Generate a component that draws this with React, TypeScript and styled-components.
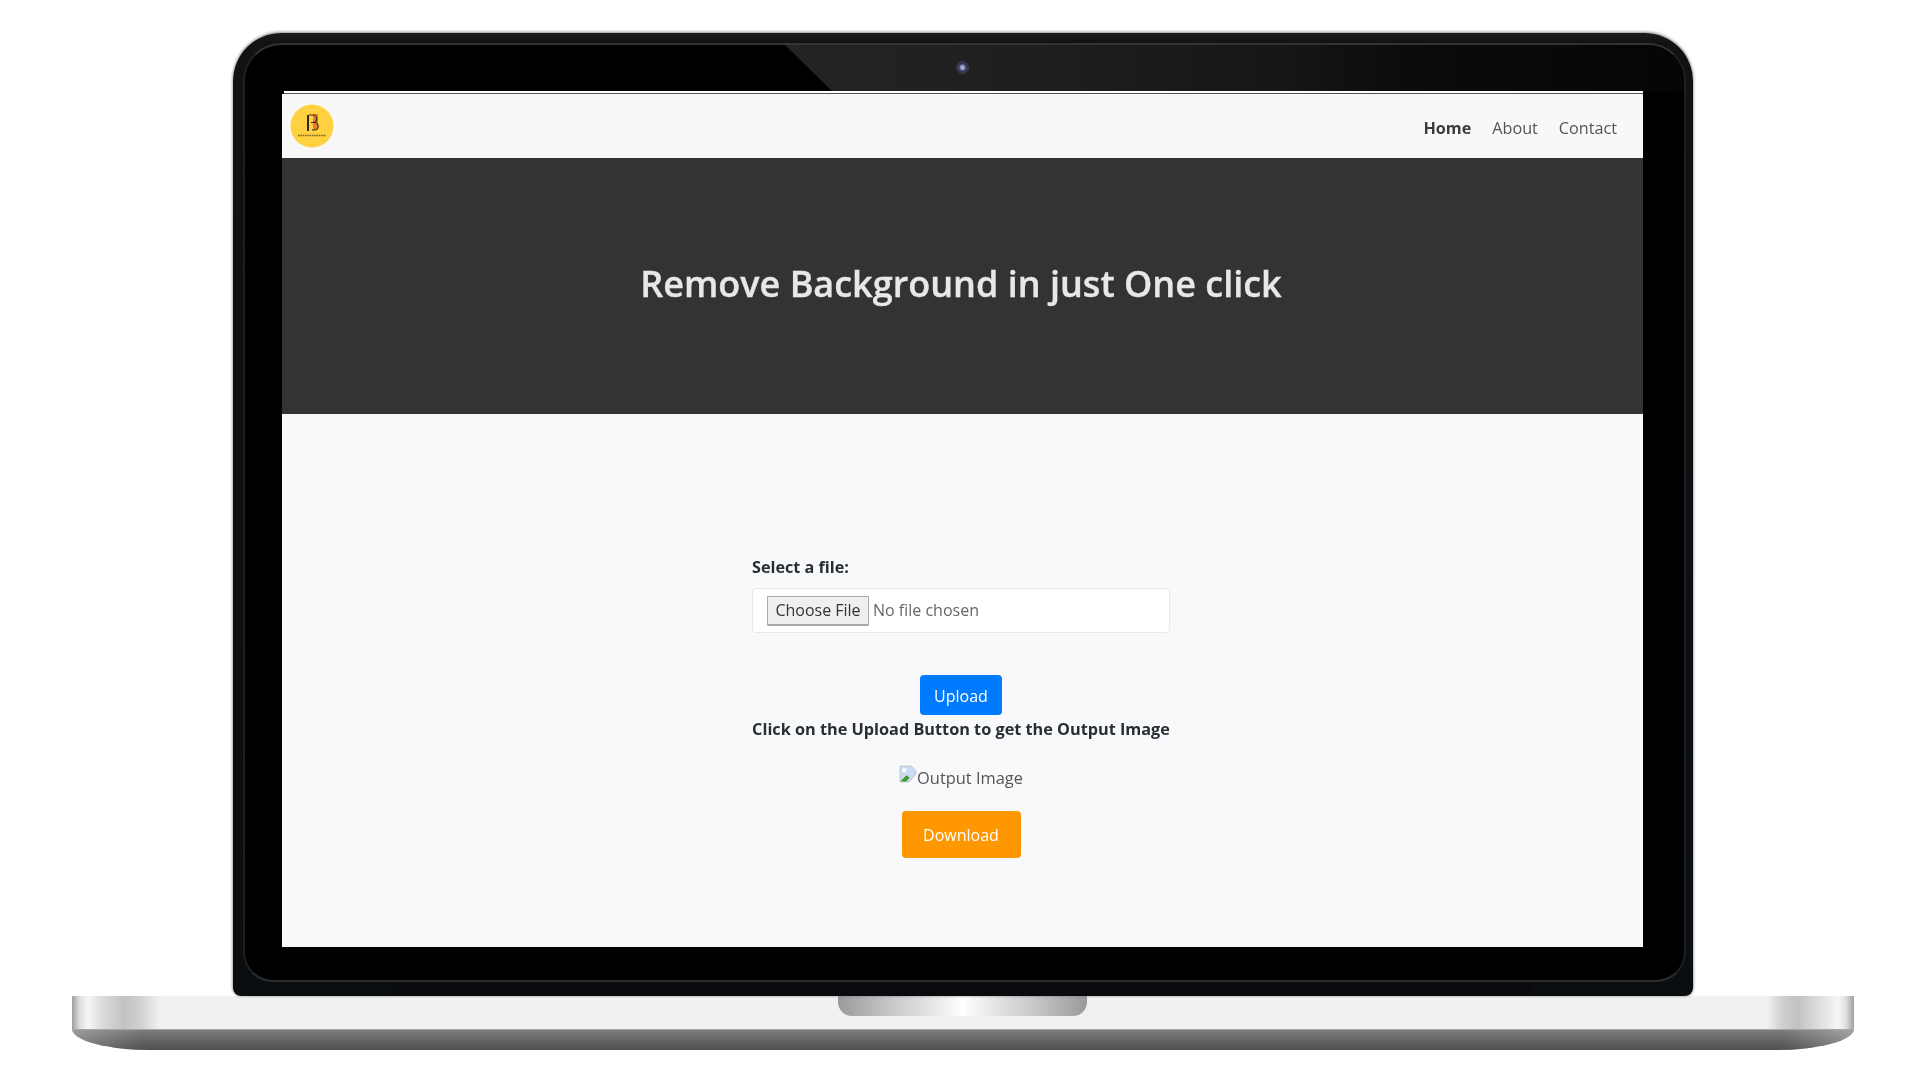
import React from "react";
import styled, { createGlobalStyle } from "styled-components";

const Global = createGlobalStyle`
  html, body { margin: 0; padding: 0; background: #fff; overflow: hidden; }
  body { font-family: "Open Sans", "Liberation Sans", sans-serif; }
`;
const Stage = styled.div`
  width: 1920px; height: 1080px; box-sizing: border-box;
  padding: 33px 0 0 6px; display: flex; flex-direction: column; align-items: center;
  background: #fff;
`;
const Lid = styled.div`
  width: 1460px; height: 963px; box-sizing: border-box;
  padding: 10px 7px 14px 10px;
  background: linear-gradient(#1c1c1c 0, #101214 10px, #0b0e11 100%);
  border-radius: 48px 48px 8px 8px;
  box-shadow: 0 -1px 3px rgba(90,90,90,.55), 0 0 3px rgba(120,120,120,.6);
  position: relative;
`;
const Bezel = styled.div`
  height: 100%; box-sizing: border-box;
  padding: 46px 41px 33px 37px;
  border: 2px solid #1d1f21;
  border-top-color: #333;
  border-bottom-color: #2a2c2f;
  border-radius: 38px 38px 30px 30px;
  background: #000;
  position: relative;
  overflow: hidden;
  &::before {
    content: ""; position: absolute; top: 0; left: 540px; right: 0; height: 46px;
    clip-path: polygon(0 0, 100% 0, 100% 100%, 47px 100%);
    background: linear-gradient(90deg, #242424 0%, #1e1e1e 30%, #161616 55%, #0b0b0b 70%, #050505 100%);
  }
`;
const Camera = styled.div`
  position: absolute; top: 16px; left: 711px; width: 13px; height: 13px; border-radius: 50%;
  background: radial-gradient(circle, #a8a8d4 0 16%, #35355a 42%, #3a3a3a 68%, #2a2a2a 100%);
`;
const Hinge = styled.div`
  position: absolute; left: 159px; right: 159px; bottom: 0; height: 11px;
  background: #0a0a0e;
  border-radius: 2px 2px 0 0;
`;
const Screen = styled.div`
  flex: 1; min-height: 0; display: flex; flex-direction: column; position: relative;
  background: #f8f9fa;
  filter: blur(0.35px);
  color: #212529;
`;
const Display = styled.div`
  height: 100%; display: flex; flex-direction: column; position: relative;
`;
const TopStrip = styled.div`
  height: 2px; margin-left: 2px; background: #fff; border-bottom: 1px solid #555; flex: none;
`;
const Nav = styled.nav`
  height: 64px; flex: none; box-sizing: border-box; padding: 0 26px 0 8px;
  background: #f8f8f8; display: flex; align-items: center; justify-content: space-between;
`;
const NavLinks = styled.div`
  display: flex; gap: 21px; font-size: 16.2px; color: #555; padding-top: 3px;
`;
const NavLink = styled.a<{ $active?: boolean }>`
  font-weight: ${(p) => (p.$active ? 700 : 400)};
  color: ${(p) => (p.$active ? "#3c3c3c" : "#555")};
`;
const Hero = styled.header`
  height: 256px; flex: none; box-sizing: border-box; padding: 0 3px 4px 0;
  background: #333; display: flex; align-items: center; justify-content: center;
`;
const Title = styled.h1`
  margin: 0; font-size: 36px; font-weight: 600; -webkit-text-stroke: 0.35px #e8e8e8; color: #e8e8e8; line-height: 1.2;
`;
const Main = styled.main`
  flex: 1; display: flex; flex-direction: column; align-items: center; padding: 142px 3px 0 0;
`;
const Form = styled.div`
  width: 418px; display: flex; flex-direction: column; align-items: center;
`;
const Label = styled.label`
  align-self: flex-start; font-size: 16.2px; font-weight: 700; line-height: 22px; color: #2a2d31;
`;
const FileBox = styled.div`
  align-self: stretch; height: 45px; box-sizing: border-box; margin-top: 10px;
  background: #fff; border: 1px solid #e6e8ea; border-radius: 4px;
  display: flex; align-items: center; padding-left: 14px; gap: 4px;
  font-size: 16px; color: #666;
`;
const ChooseButton = styled.span`
  width: 102px; height: 30px; box-sizing: border-box;
  background: #efefef; border: 1px solid #a8a8a8; border-bottom-width: 2px; border-radius: 1px;
  display: flex; align-items: center; justify-content: center; color: #333;
`;
const FileName = styled.span`
  padding-bottom: 2px;
`;
const Upload = styled.button`
  margin-top: 42px; width: 82px; height: 40px; border: 0; border-radius: 4px;
  background: #007bff; color: #fff; font: 400 16px "Open Sans", sans-serif; padding: 2px 0 0;
`;
const Hint = styled.div`
  font-size: 16.25px; font-weight: 700; line-height: 28px; color: #2a2d31; white-space: nowrap;
`;
const Broken = styled.div`
  margin-top: 22px; height: 24px; display: flex; align-items: center; font-size: 16.4px; color: #555;
`;
const BrokenGlyph = styled.svg`
  flex: none; margin-top: -6px;
`;
const Download = styled.button`
  margin-top: 22px; width: 119px; height: 47px; border: 0; border-radius: 4px;
  background: #ff9800; color: #fff; font: 400 16px "Open Sans", sans-serif; padding: 0;
`;
const Base = styled.div`
  width: 1782px; flex: none; display: flex; flex-direction: column;
`;
const SilverBar = styled.div`
  height: 33px; display: flex; justify-content: center;
  background:
    linear-gradient(90deg, #9e9e9e 0, #e0e0e0 8px, #f6f6f6 16px, #dcdcdc 30px, #c2c2c2 52px, #d0d0d0 68px, #f0f1f1 88px, rgba(240,241,241,0) 90px),
    linear-gradient(270deg, #a0a0a0 0, #dedede 8px, #f6f6f6 16px, #dcdcdc 36px, #c2c2c2 56px, #d0d0d0 72px, #f0f1f1 87px, rgba(240,241,241,0) 89px),
    #f0f1f1;
`;
const Notch = styled.div`
  width: 249px; height: 20px; margin-left: -2px; border-radius: 0 0 14px 14px;
  background: linear-gradient(90deg, #9a9a9c 0, #c4c5c7 20%, #e2e3e3 36%, #f4f5f5 45%, #fff 50%, #f4f5f5 55%, #e2e3e3 64%, #c4c5c7 80%, #9a9a9c 100%);
`;
const Foot = styled.div`
  height: 21px; box-sizing: border-box; border-top: 1px solid #a6a6a6;
  border-radius: 0 0 78px 78px / 0 0 21px 21px;
  background:
    linear-gradient(90deg, rgba(255,255,255,.25) 0, rgba(255,255,255,0) 70px, rgba(255,255,255,0) calc(100% - 70px), rgba(255,255,255,.3) 100%),
    linear-gradient(#7b7c7e, #4f4f50);
`;

const Logo = () => (
  <svg width="44" height="44" viewBox="0 0 44 44" aria-label="logo">
    <circle cx="22" cy="22" r="21.5" fill="#ffd040" />
    <rect x="23" y="10" width="5" height="16" fill="#e8642c" opacity=".8" />
    <rect x="17" y="11" width="2" height="16" fill="#2b2a20" />
    <path d="M19 11h4a3.5 3.5 0 0 1 0 7.5h-2M22 18.5h2.5a3.5 3.5 0 0 1 0 7.5H22" fill="none" stroke="#3a2f18" strokeWidth="1.2" />
    <line x1="8" y1="31.5" x2="36" y2="31.5" stroke="#7d6a26" strokeWidth="1.3" strokeDasharray="1.6 .7" />
  </svg>
);
const BrokenIcon = () => (
  <BrokenGlyph width="18" height="18" viewBox="0 0 16 16" aria-hidden="true">
    <path d="M1 1h10l4 4v3L9 15H1z" fill="#cddbf2" stroke="#b4b9c2" strokeWidth=".7" />
    <path d="M1.3 14.7l5.2-5.5 3 2.2-3.2 3.3z" fill="#3f9a2c" />
    <path d="M3 3h3.4v3.4H3z" fill="#fff" />
  </BrokenGlyph>
);

export default function App() {
  return (
    <Stage>
      <Global />
      <Lid>
        <Bezel>
          <Camera />
          <Display>
            <TopStrip />
            <Screen>
              <Nav>
                <Logo />
                <NavLinks>
                  <NavLink $active>Home</NavLink>
                  <NavLink>About</NavLink>
                  <NavLink>Contact</NavLink>
                </NavLinks>
              </Nav>
              <Hero>
                <Title>Remove Background in just One click</Title>
              </Hero>
              <Main>
                <Form>
                  <Label>Select a file:</Label>
                  <FileBox>
                    <ChooseButton>Choose File</ChooseButton>
                    <FileName>No file chosen</FileName>
                  </FileBox>
                  <Upload>Upload</Upload>
                  <Hint>Click on the Upload Button to get the Output Image</Hint>
                  <Broken>
                    <BrokenIcon />
                    <span>Output Image</span>
                  </Broken>
                  <Download>Download</Download>
                </Form>
              </Main>
            </Screen>
          </Display>
        </Bezel>
        <Hinge />
      </Lid>
      <Base>
        <SilverBar>
          <Notch />
        </SilverBar>
        <Foot />
      </Base>
    </Stage>
  );
}
